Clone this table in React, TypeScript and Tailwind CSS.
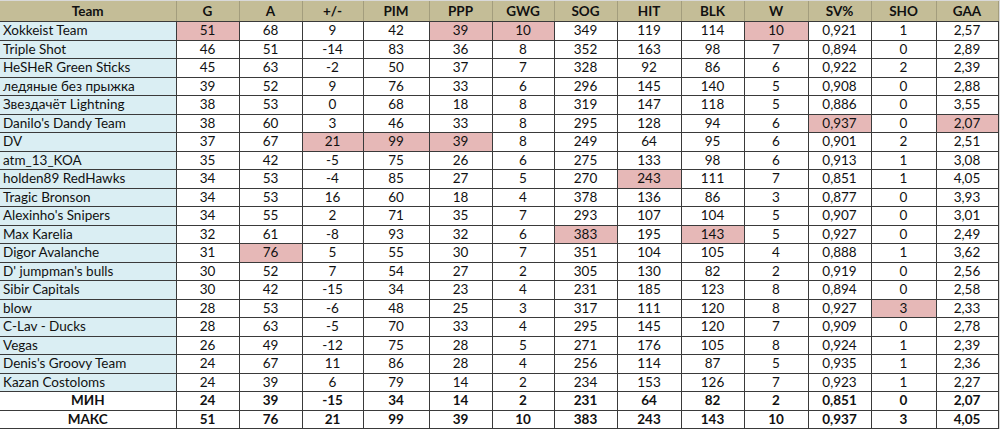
const columns = ["G", "A", "+/-", "PIM", "PPP", "GWG", "SOG", "HIT", "BLK", "W", "SV%", "SHO", "GAA"];
const widths = [176, 63, 63, 61, 66, 63, 62, 63, 64, 63, 64, 63, 65, 62];

// "*" marks a highlighted cell
const teams: [string, string[]][] = [
  ["Xokkeist Team", ["51*", "68", "9", "42", "39*", "10*", "349", "119", "114", "10*", "0,921", "1", "2,57"]],
  ["Triple Shot", ["46", "51", "-14", "83", "36", "8", "352", "163", "98", "7", "0,894", "0", "2,89"]],
  ["HeSHeR Green Sticks", ["45", "63", "-2", "50", "37", "7", "328", "92", "86", "6", "0,922", "2", "2,39"]],
  ["ледяные без прыжка", ["39", "52", "9", "76", "33", "6", "296", "145", "140", "5", "0,908", "0", "2,88"]],
  ["Звездачёт Lightning", ["38", "53", "0", "68", "18", "8", "319", "147", "118", "5", "0,886", "0", "3,55"]],
  ["Danilo's Dandy Team", ["38", "60", "3", "46", "33", "8", "295", "128", "94", "6", "0,937*", "0", "2,07*"]],
  ["DV", ["37", "67", "21*", "99*", "39*", "8", "249", "64", "95", "6", "0,901", "2", "2,51"]],
  ["atm_13_KOA", ["35", "42", "-5", "75", "26", "6", "275", "133", "98", "6", "0,913", "1", "3,08"]],
  ["holden89 RedHawks", ["34", "53", "-4", "85", "27", "5", "270", "243*", "111", "7", "0,851", "1", "4,05"]],
  ["Tragic Bronson", ["34", "53", "16", "60", "18", "4", "378", "136", "86", "3", "0,877", "0", "3,93"]],
  ["Alexinho's Snipers", ["34", "55", "2", "71", "35", "7", "293", "107", "104", "5", "0,907", "0", "3,01"]],
  ["Max Karelia", ["32", "61", "-8", "93", "32", "6", "383*", "195", "143*", "5", "0,927", "0", "2,49"]],
  ["Digor Avalanche", ["31", "76*", "5", "55", "30", "7", "351", "104", "105", "4", "0,888", "1", "3,62"]],
  ["D' jumpman's bulls", ["30", "52", "7", "54", "27", "2", "305", "130", "82", "2", "0,919", "0", "2,56"]],
  ["Sibir Capitals", ["30", "42", "-15", "34", "23", "4", "231", "185", "123", "8", "0,894", "0", "2,58"]],
  ["blow", ["28", "53", "-6", "48", "25", "3", "317", "111", "120", "8", "0,927", "3*", "2,33"]],
  ["C-Lav - Ducks", ["28", "63", "-5", "70", "33", "4", "295", "145", "120", "7", "0,909", "0", "2,78"]],
  ["Vegas", ["26", "49", "-12", "75", "28", "5", "271", "176", "105", "8", "0,924", "1", "2,39"]],
  ["Denis's Groovy Team", ["24", "67", "11", "86", "28", "4", "256", "114", "87", "5", "0,935", "1", "2,36"]],
  ["Kazan Costoloms", ["24", "39", "6", "79", "14", "2", "234", "153", "126", "7", "0,923", "1", "2,27"]],
];

const totals: [string, string[]][] = [
  ["МИН", ["24", "39", "-15", "34", "14", "2", "231", "64", "82", "2", "0,851", "0", "2,07"]],
  ["МАКС", ["51", "76", "21", "99", "39", "10", "383", "243", "143", "10", "0,937", "3", "4,05"]],
];

export default function App() {
  return (
    <div className="h-[429px] w-[1000px] overflow-hidden bg-[#d9d9d9] pt-px font-['Lato',sans-serif] text-[13.5px] text-[#111]">
      <table className="table-fixed border-collapse bg-white">
        <colgroup>
          {widths.map((w, i) => (
            <col key={i} style={{ width: w }} />
          ))}
        </colgroup>
        <thead>
          <tr className="h-[20px] bg-[#c4bd97] font-bold">
            <th className="border-r border-b border-r-[#a39d7d] border-b-[#3a3a3a] text-center">Team</th>
            {columns.map((c) => (
              <th key={c} className="border-r border-b border-r-[#a39d7d] border-b-[#3a3a3a] text-center">
                {c}
              </th>
            ))}
          </tr>
        </thead>
        <tbody>
          {teams.map(([name, vals]) => (
            <tr key={name} className="h-[18.5px] leading-none">
              <td className="truncate border-r border-b border-[#3a3a3a] bg-[#daeef3] pl-[3px]">{name}</td>
              {vals.map((v, i) => {
                const hot = v.endsWith("*");
                return (
                  <td
                    key={i}
                    className={`border-r border-b border-[#3a3a3a] text-center ${hot ? "bg-[#e6b8b7]" : ""}`}
                  >
                    {hot ? v.slice(0, -1) : v}
                  </td>
                );
              })}
            </tr>
          ))}
          {totals.map(([label, vals]) => (
            <tr key={label} className="h-[18.5px] font-bold leading-none">
              <td className="border-r border-b border-[#3a3a3a] text-center">{label}</td>
              {vals.map((v, i) => (
                <td key={i} className="border-r border-b border-[#3a3a3a] text-center">
                  {v}
                </td>
              ))}
            </tr>
          ))}
        </tbody>
      </table>
    </div>
  );
}
